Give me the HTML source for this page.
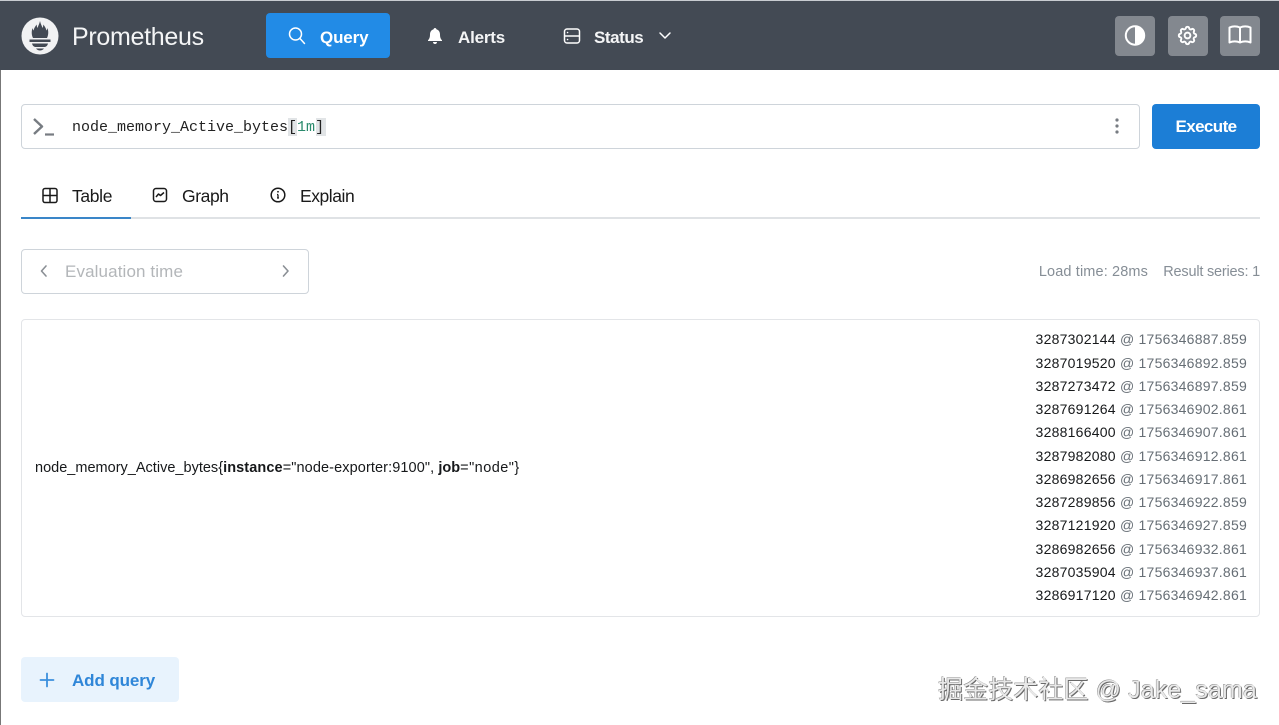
<!DOCTYPE html>
<html lang="en">
<head>
<meta charset="utf-8">
<title>Prometheus</title>
<style>
html,body{margin:0;padding:0;background:#fff}
body{width:1279px;height:725px;position:relative;overflow:hidden;font-family:"Liberation Sans","Noto Sans CJK SC",sans-serif;color:#1a1a1a}
.a{position:absolute;white-space:nowrap}
svg{position:absolute;display:block;fill:none}
.row{position:absolute;right:32px;width:230px;text-align:right;font-size:14px;line-height:20px;color:#666e75;white-space:nowrap;letter-spacing:.24px}
.row b{font-weight:400;color:#16181a}
</style>
</head>
<body>
<div class="a" style="left:0;top:0;width:1279px;height:1px;background:#c8ccd1"></div>
<div class="a" style="left:0;top:1px;width:1279px;height:69px;background:#434a54"></div>
<div class="a" style="left:0;top:70px;width:1px;height:655px;background:#777"></div>

<svg style="left:21px;top:17px" width="38" height="38" viewBox="0 0 38 38">
<circle cx="19" cy="19" r="18.500" fill="#f1f2f3"/>
<path fill="#434a54" d="M19 4c.6 3 2 5 2.500 7 .5-1 .8-2 .8-3.500 1.600 2 2.700 4 3.200 6 .5-.7.800-1.300 1-2.500 1 3 1.200 6.500-.5 10h-14c-1.700-3.500-1.500-7-.5-10 .2 1.200.5 1.800 1 2.500.5-2 1.600-4 3.200-6 0 1.500.3 2.500.8 3.500C17 9 18.400 7 19 4zM8.500 22.500h21v2.500h-21zM11 26.500h16c-.5 2-1.500 3-3 3.500H14c-1.500-.5-2.500-1.500-3-3.500zM15 31.500h8c-1 1.200-2.500 2-4 2s-3-.8-4-2z"/>
</svg>
<div class="a" style="left:72px;top:21px;font-size:25px;line-height:32px;color:#f4f5f6;letter-spacing:-.3px">Prometheus</div>

<div class="a" style="left:266px;top:13px;width:124px;height:45px;background:#228be6;border-radius:4px"></div>
<svg style="left:287px;top:26px" width="20" height="20" viewBox="0 0 20 20"><circle cx="8.500" cy="8" r="6" stroke="#fff" stroke-width="1.500"/><path d="M13 12.500l4.500 5" stroke="#fff" stroke-width="1.500" stroke-linecap="round"/></svg>
<div class="a" style="left:320px;top:27px;font-size:17px;line-height:22px;font-weight:700;color:#fff;letter-spacing:-.15px">Query</div>

<svg style="left:426px;top:27px" width="18" height="18" viewBox="0 0 18 18"><path fill="#fff" d="M9 1c.8 0 1.300.5 1.400 1.300C12.700 3 14 5 14 7.500c0 3 .7 4.500 2 5.700v.8H2v-.8c1.300-1.200 2-2.700 2-5.700C4 5 5.300 3 7.600 2.300 7.700 1.500 8.200 1 9 1zM7 15h4c0 1.200-.9 2-2 2s-2-.8-2-2z"/></svg>
<div class="a" style="left:458px;top:27px;font-size:17px;line-height:22px;font-weight:700;color:#f4f5f6;letter-spacing:-.2px">Alerts</div>

<svg style="left:563px;top:27px" width="18" height="18" viewBox="0 0 18 18"><rect x="1.500" y="2" width="15" height="14" rx="2.500" stroke="#fff" stroke-width="1.500"/><path d="M1.500 9h15" stroke="#fff" stroke-width="1.500"/><path d="M4.500 5.500h.1M4.500 12.500h.1" stroke="#fff" stroke-width="1.500" stroke-linecap="round"/></svg>
<div class="a" style="left:594px;top:27px;font-size:17px;line-height:22px;font-weight:700;color:#f4f5f6;letter-spacing:-.45px">Status</div>
<svg style="left:657px;top:29px" width="16" height="14" viewBox="0 0 16 14"><path d="M3 4l5 5 5-5" stroke="#fff" stroke-width="1.500" stroke-linecap="round" stroke-linejoin="round"/></svg>

<div class="a" style="left:1115px;top:16px;width:40px;height:40px;background:#83888f;border-radius:4px"></div>
<div class="a" style="left:1168px;top:16px;width:40px;height:40px;background:#83888f;border-radius:4px"></div>
<div class="a" style="left:1220px;top:16px;width:40px;height:40px;background:#83888f;border-radius:4px"></div>
<svg style="left:1124px;top:25px" width="22" height="22" viewBox="0 0 22 22"><circle cx="11" cy="10.500" r="9.200" stroke="#fff" stroke-width="2"/><path fill="#fff" d="M11 1.500a9 9 0 0 1 0 18z"/></svg>
<svg style="left:1176px;top:24px" width="23" height="23" viewBox="0 0 24 24"><path d="M10.300 4.300c.4-1.800 3-1.800 3.400 0a1.700 1.700 0 0 0 2.600 1.100c1.500-.9 3.300.8 2.400 2.400a1.700 1.700 0 0 0 1 2.500c1.800.4 1.800 3 0 3.400a1.700 1.700 0 0 0-1 2.600c.9 1.500-.9 3.300-2.400 2.400a1.700 1.700 0 0 0-2.600 1c-.4 1.800-3 1.800-3.400 0a1.700 1.700 0 0 0-2.600-1c-1.500.9-3.300-.9-2.400-2.400a1.700 1.700 0 0 0-1-2.600c-1.800-.4-1.800-3 0-3.400a1.700 1.700 0 0 0 1-2.500c-.9-1.600.9-3.300 2.400-2.400 1 .6 2.300.1 2.600-1.100z" stroke="#fff" stroke-width="2" stroke-linejoin="round"/><circle cx="12" cy="12" r="3" stroke="#fff" stroke-width="2"/></svg>
<svg style="left:1228px;top:24px" width="24" height="22" viewBox="0 0 24 22"><path d="M1.500 3.500c3.500-1.500 7-1.500 10.500 0 3.500-1.500 7-1.500 10.500 0v15c-3.500-1.500-7-1.500-10.500 0-3.500-1.500-7-1.500-10.500 0zM12 3.500v15" stroke="#fff" stroke-width="2" stroke-linejoin="round"/></svg>

<div class="a" style="left:21px;top:104px;width:1117px;height:43px;border:1px solid #ced4da;border-radius:4px"></div>
<svg style="left:31px;top:116px" width="26" height="22" viewBox="0 0 26 22"><path d="M3 3l8 7.500-8 7.500" stroke="#777c82" stroke-width="2.400" stroke-linejoin="round"/><path d="M14 18.500h9" stroke="#777c82" stroke-width="2.200"/></svg>
<div class="a" style="left:288px;top:118px;width:9px;height:18px;background:#e1e4e6"></div>
<div class="a" style="left:316px;top:118px;width:10px;height:18px;background:#e1e4e6"></div>
<div class="a" style="left:72px;top:118px;font-family:'Liberation Mono',monospace;font-size:15px;line-height:20px;color:#222">node_memory_Active_bytes[<span style="color:#2a8a6c">1m</span>]</div>
<svg style="left:1110px;top:117px" width="14" height="18" viewBox="0 0 14 18"><circle cx="7" cy="3" r="1.600" fill="#777c82"/><circle cx="7" cy="9" r="1.600" fill="#777c82"/><circle cx="7" cy="15" r="1.600" fill="#777c82"/></svg>

<div class="a" style="left:1152px;top:104px;width:108px;height:45px;background:#1c7ed6;border-radius:4px;color:#fff;font-size:17px;font-weight:700;line-height:45px;text-align:center;letter-spacing:-.6px">Execute</div>

<div class="a" style="left:21px;top:217px;width:1239px;height:2px;background:#dfe2e5"></div>
<div class="a" style="left:21px;top:217px;width:110px;height:2px;background:#3a86c8"></div>
<svg style="left:41px;top:187px" width="18" height="18" viewBox="0 0 18 18"><rect x="2" y="1.500" width="14" height="14" rx="2" stroke="#1a1a1a" stroke-width="1.500"/><path d="M2 8.500h14M9 1.500v14" stroke="#1a1a1a" stroke-width="1.500"/></svg>
<div class="a" style="left:72px;top:185px;font-size:17.500px;line-height:22px;color:#1a1a1a;letter-spacing:-.35px">Table</div>
<svg style="left:151px;top:186px" width="18" height="18" viewBox="0 0 18 18"><rect x="2.500" y="2.500" width="13" height="13" rx="2.500" stroke="#1a1a1a" stroke-width="1.500"/><path d="M5 11l2.500-3 2 1.500L13 6.500" stroke="#1a1a1a" stroke-width="1.500" stroke-linejoin="round"/></svg>
<div class="a" style="left:182px;top:185px;font-size:17.500px;line-height:22px;color:#1a1a1a;letter-spacing:-.4px">Graph</div>
<svg style="left:269px;top:186px" width="18" height="18" viewBox="0 0 18 18"><circle cx="9" cy="9" r="6.800" stroke="#1a1a1a" stroke-width="1.500"/><path d="M9 8.500v3.500M8 8.500h1M8 12h2" stroke="#1a1a1a" stroke-width="1.300"/><circle cx="9" cy="5.800" r=".9" fill="#1a1a1a"/></svg>
<div class="a" style="left:300px;top:185px;font-size:17.500px;line-height:22px;color:#1a1a1a;letter-spacing:-.45px">Explain</div>

<div class="a" style="left:21px;top:249px;width:286px;height:43px;border:1px solid #ced4da;border-radius:4px"></div>
<svg style="left:38px;top:264px" width="12" height="14" viewBox="0 0 12 14"><path d="M8 2L3.500 7 8 12" stroke="#8a8f95" stroke-width="1.600" stroke-linecap="round" stroke-linejoin="round"/></svg>
<div class="a" style="left:65px;top:261px;font-size:17px;line-height:22px;color:#b3b6b9;letter-spacing:.12px">Evaluation time</div>
<svg style="left:280px;top:264px" width="12" height="14" viewBox="0 0 12 14"><path d="M3.500 2L8 7l-4.500 5" stroke="#8a8f95" stroke-width="1.600" stroke-linecap="round" stroke-linejoin="round"/></svg>

<div class="a" style="right:131px;top:262px;font-size:14.500px;line-height:20px;color:#868e96;letter-spacing:.13px">Load time: 28ms</div>
<div class="a" style="right:19px;top:262px;font-size:14.500px;line-height:20px;color:#868e96;letter-spacing:-.2px">Result series: 1</div>

<div class="a" style="left:21px;top:319px;width:1237px;height:296px;border:1px solid #e3e5e8;border-radius:4px"></div>
<div class="a" style="left:35px;top:458px;font-size:14.500px;line-height:20px;color:#16181a;letter-spacing:.01px">node_memory_Active_bytes{<b style="letter-spacing:.1px">instance</b><span style="letter-spacing:.1px">="node-exporter:9100", </span><b>job</b><span style="letter-spacing:.45px">="node"}</span></div>

<div class="row" style="top:329px"><b>3287302144</b> @ 1756346887.859</div>
<div class="row" style="top:353px"><b>3287019520</b> @ 1756346892.859</div>
<div class="row" style="top:376px"><b>3287273472</b> @ 1756346897.859</div>
<div class="row" style="top:399px"><b>3287691264</b> @ 1756346902.861</div>
<div class="row" style="top:422px"><b>3288166400</b> @ 1756346907.861</div>
<div class="row" style="top:446px"><b>3287982080</b> @ 1756346912.861</div>
<div class="row" style="top:469px"><b>3286982656</b> @ 1756346917.861</div>
<div class="row" style="top:492px"><b>3287289856</b> @ 1756346922.859</div>
<div class="row" style="top:515px"><b>3287121920</b> @ 1756346927.859</div>
<div class="row" style="top:539px"><b>3286982656</b> @ 1756346932.861</div>
<div class="row" style="top:562px"><b>3287035904</b> @ 1756346937.861</div>
<div class="row" style="top:585px"><b>3286917120</b> @ 1756346942.861</div>

<div class="a" style="left:21px;top:657px;width:158px;height:45px;background:#e8f3fd;border-radius:4px"></div>
<svg style="left:38px;top:671px" width="18" height="18" viewBox="0 0 18 18"><path d="M9 2.500v13M2.500 9h13" stroke="#3a8fdd" stroke-width="1.800" stroke-linecap="round"/></svg>
<div class="a" style="left:72px;top:670px;font-size:17px;line-height:22px;font-weight:700;color:#2f86d8;letter-spacing:-.1px">Add query</div>

<div class="a" style="left:938px;top:676px;font-size:25px;line-height:28px;color:#e9e9e9;text-shadow:1px 1px 0 #6a6a6a,-.5px -.5px 0 #8a8a8a;font-family:'Liberation Sans','Noto Sans CJK SC',sans-serif;letter-spacing:.1px">掘金技术社区 @ Jake_sama</div>
</body>
</html>
